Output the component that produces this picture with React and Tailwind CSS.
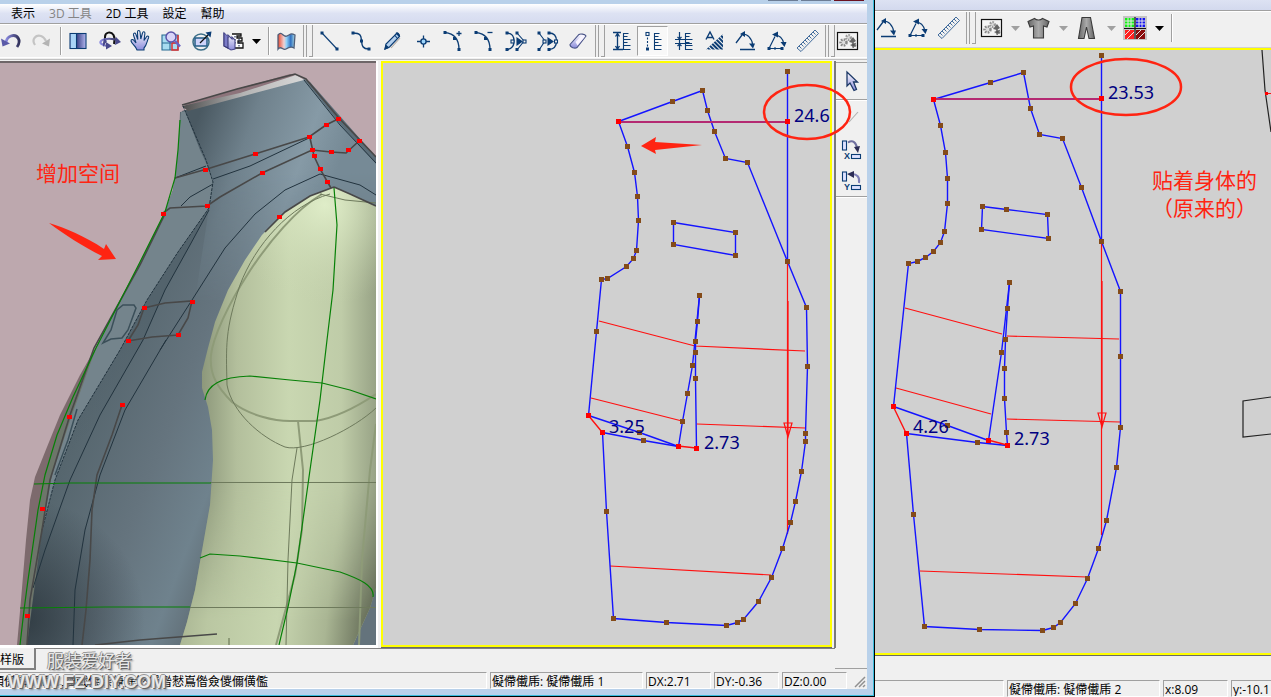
const NAVY = '#0b3c74';

function Icon({ children, size = 26, box = '0 0 26 26' }) {
    return (
        <svg width={size} height={size} viewBox={box} fill="none" stroke={NAVY} strokeWidth="1.1" className="shrink-0">
            {children}
        </svg>
    );
}

/* small filled square centred on a point */
function Dot({ x, y, r = 1.5, fill = NAVY }) {
    return <rect x={x - r} y={y - r} width={r * 2} height={r * 2} fill={fill} stroke={fill === NAVY ? 'none' : NAVY} />;
}

const UndoIcon = () => (
    <Icon>
        <path d="M19 19c5-7 0-13-6-11-3 1-4.500 3.500-5 6" stroke="url(#lilac)" strokeWidth="2.800" />
        <path d="M3 10.500l1.500 8 7.500-3z" fill="#5a5aa8" stroke="none" />
    </Icon>
);

const RedoIcon = () => (
    <Icon>
        <path d="M7 17c-4-6 1-10.500 6-9 3 1 4 3 5 5" stroke="#c4c4c4" strokeWidth="2.200" />
        <path d="M22 10.500l-1 8-7-3z" fill="#b4b4b4" stroke="none" />
    </Icon>
);

const PanelIcon = () => (
    <Icon>
        <rect x="5" y="5.500" width="16" height="15" fill="url(#indigo)" />
        <rect x="5.600" y="6" width="5.400" height="14" fill="#a9d4f7" stroke="none" />
        <path d="M11.500 5.500v15" />
    </Icon>
);

const OrbitIcon = () => (
    <Icon>
        <path d="M9 13V9c0-5 6-6 8.500-2 1.500 3 1.500 6 .5 9" stroke="#111" strokeWidth="2" />
        <path d="M22 13c-4-3-14-3-17 0-2 2 1 4 6 5" stroke="url(#lilac)" strokeWidth="2.200" />
        <path d="M10 21.500V14l6 4zM20 9l5 5-6 3zM7 19l4-6-3-3-1 5z" fill="#49498c" stroke="none" />
    </Icon>
);

const HandIcon = () => (
    <Icon>
        <path
            d="M9 20c-1-2-4-4-5-7 0-2 2-2 3-.5L9 15 6.500 7c-.5-2 1.500-2.600 2.300-1l2 5.500L10.500 4c0-2 2.300-2 2.500 0l.8 7L15.500 5c.5-2 2.600-1.500 2.400.5L17 12.500l2.500-3.700c1-1.500 2.800-.5 2 1.200C20 13 20 17 17 20v2H10z"
            fill="url(#hand)"
        />
    </Icon>
);

const ZoomIcon = () => (
    <Icon>
        <path d="M4 7h16v15H4zM4 15h16M12 8v14" fill="#a8dcf0" stroke="#276a92" />
        <path d="M14 15h6V7M14 15v7h6v-7" stroke="#e03030" strokeWidth="1.500" />
        <circle cx="13" cy="9" r="5" fill="#d8d4f8" stroke="#5a54a8" strokeWidth="1.500" />
        <path d="M17 13l5 5.500" stroke="#6a60c0" strokeWidth="2.600" />
    </Icon>
);

const ScaleIcon = () => (
    <Icon>
        <circle cx="12" cy="14" r="8" stroke="#3d6f88" strokeWidth="1.500" />
        <rect x="6" y="10" width="12" height="8" fill="#cfd4fa" stroke="#235c86" strokeWidth="1.500" />
        <path d="M11 15L21 5" stroke="#111" strokeWidth="1.300" />
        <path d="M22.500 3.500l-1 6-5-5z" fill={NAVY} stroke="none" />
    </Icon>
);

const LayersIcon = () => (
    <Icon>
        <path d="M12 6h9v2h-4v2h5v3h-4v2h5v5h-9" fill="#fff" stroke="#111" strokeWidth="1.300" />
        <path d="M15 8v9M19 11v8" stroke="#1d2a55" strokeDasharray="1.500 1.500" />
        <path d="M4 5l4 4V7l4 4V9l3 3v9l-4 1-7-4z" fill="url(#hand)" stroke="#46468a" />
        <path d="M4 5v13l4 2V9" fill="#7c7cc8" stroke="#3b3b78" />
    </Icon>
);

const ClothIcon = () => (
    <Icon>
        <path d="M5 7c4-5 5 3 9 1s4-3 8-1l-1 13c-3-2-5-1-8 1s-5-4-8 0z" fill="url(#cloth)" stroke="#4e5d78" strokeWidth="1.300" />
    </Icon>
);

const LineIcon = () => (
    <Icon>
        <path d="M5 5l15 16" />
        <Dot x={5} y={5} />
        <Dot x={20} y={21} />
    </Icon>
);

const SplineIcon = () => (
    <Icon>
        <path d="M5 5c9 0 8 4 8.500 8S14 21 21 21" strokeWidth="1.400" />
        <Dot x={5} y={5} />
        <Dot x={13.500} y={13} />
        <Dot x={21} y={21} />
    </Icon>
);

const PencilIcon = () => (
    <Icon>
        <path d="M6 21l1-5L17.500 5.500l3 3L10.500 19z" fill="#b4d0ee" strokeWidth="1.200" />
        <path d="M15.500 7l3 3.500M17 5.500c1-2 4 .5 3.500 3M6 21l3.500-1.500-2.500-2z" fill={NAVY} />
        <path d="M12 20l9-10" stroke="#b0a8a0" />
    </Icon>
);

const PointIcon = () => (
    <Icon>
        <path d="M7 13.500h13M13.500 7.500v12" strokeWidth="1.300" />
        <circle cx="13.500" cy="13.500" r="2.600" fill="#9cd4fa" strokeWidth="1.400" />
    </Icon>
);

function ArcEdit({ plus }) {
    return (
        <Icon>
            <path d="M4 4.500c9 1 14 7 14 17" strokeWidth="1.300" />
            <Dot x={4} y={4.500} />
            <Dot x={13.500} y={10.500} />
            <Dot x={18} y={21.500} />
            <path d={plus ? 'M15.500 5.500h5M18 3v5' : 'M15.500 4.500h5'} strokeWidth="1.300" />
        </Icon>
    );
}

const RoundIcon = () => (
    <Icon>
        <path d="M4 5c6 0 7 4 7 8s-1 8-7 8.500" strokeWidth="1.300" />
        <path d="M14 5l7 8-7 9" />
        <path d="M14 10v7l5-3.500z" fill={NAVY} />
        <Dot x={4} y={5} /><Dot x={4} y={21.500} /><Dot x={14} y={5} /><Dot x={14} y={21.500} />
        <Dot x={9.500} y={13.500} fill="#f0f0f0" /><Dot x={21.500} y={13.500} fill="#f0f0f0" />
    </Icon>
);

const SharpIcon = () => (
    <Icon>
        <path d="M5 5l6 8-6 9" />
        <path d="M15 5c6 0 7.500 4 7.500 8s-1.500 8-7.500 8.500" strokeWidth="1.300" />
        <path d="M14 10v7l5-3.500z" fill={NAVY} />
        <Dot x={5} y={5} /><Dot x={5} y={21.500} /><Dot x={15} y={5} /><Dot x={15} y={21.500} />
        <Dot x={10.500} y={13.500} fill="#f0f0f0" /><Dot x={22} y={13.500} fill="#f0f0f0" />
    </Icon>
);

const EraserIcon = () => (
    <Icon>
        <path d="M5 16.500L14 6.500c1-1 6-.5 7 1.500L12 19.500c-2 1.500-7 0-7-3z" fill="url(#hand)" stroke="#4a5488" />
        <path d="M10.500 14L17 7l3 1.500-7.500 9z" fill="#f8f4ff" stroke="none" />
    </Icon>
);

function RulerMarks({ kind }) {
    return (
        <Icon>
            <path d="M14.500 5v17M14.500 5.500h5M14.500 8.500h4M14.500 11.500h7M14.500 14.500h4M14.500 17.500h7M14.500 21.500h7" />
            {kind === 'full' && <path d="M4 4.500h8M4 21.500h10M8.500 5v16M6.500 8.500l2-3 2 3M6.500 18l2 3 2-3" strokeWidth="1.300" />}
            {kind === 'dots' && (
                <>
                    <path d="M7.500 6v14" strokeDasharray="2 1.500" />
                    <Dot x={7.500} y={6} fill="#fff" />
                    <Dot x={7.500} y={21} />
                </>
            )}
            {kind === 'inner' && <path d="M4 11.500h17M4 15.500h17M8.500 4v18M6.500 9l2 2 2-2M6.500 18l2-2 2 2" strokeWidth="1.200" />}
        </Icon>
    );
}

const AreaIcon = () => (
    <Icon>
        <path d="M4 21.500L21 6v15.500z" fill="url(#hatch)" stroke="none" />
        <path d="M4 11.500L8 4l4 7.500M5.500 9.500h5" strokeWidth="1.400" />
    </Icon>
);

const AngleIcon = () => (
    <Icon>
        <path d="M3 15L9 7M7 21.500h15" strokeWidth="1.300" />
        <path d="M9 6c7 0 10 5 11 12" strokeWidth="1.200" />
        <path d="M7 6l5-3v6zM20 20.500l-4-5h6z" fill={NAVY} stroke="none" />
    </Icon>
);

const TriAngleIcon = () => (
    <Icon>
        <path d="M5 20.500h13M5 20.500l6-12" strokeWidth="1.200" />
        <path d="M10 7c7 0 9 4 10 9" strokeWidth="1.200" />
        <path d="M8 6.500l6-3v6zM20.500 19l-4-5h6z" fill={NAVY} stroke="none" />
        <Dot x={5} y={20.500} /><Dot x={18} y={20.500} /><Dot x={11} y={20.500} r={1} />
    </Icon>
);

const MeasureIcon = () => (
    <Icon>
        <g stroke="#2e5c92" strokeWidth="0.900">
            <path d="M2 20L20 2l3.500 3.500L6 23.500z" />
            <path d="M4 18l2.500 2.500M6 16l2.500 2.500M8 14l2.500 2.500M10 12l2.500 2.500M12 10l2.500 2.500M14 8l2.500 2.500M16 6l2.500 2.500M18 4l2.500 2.500" />
        </g>
    </Icon>
);

const GearsIcon = () => (
    <Icon>
        <rect x="2.500" y="4.500" width="20" height="17" fill="#f4f4f4" stroke="#111" strokeWidth="1.200" />
        <circle cx="8.500" cy="14.500" r="3" fill="#ddd" stroke="#888" strokeWidth="2.500" strokeDasharray="1.600 1.200" />
        <circle cx="13.500" cy="9.500" r="2.300" fill="#ddd" stroke="#999" strokeWidth="2.300" strokeDasharray="1.400 1" />
        <circle cx="18.500" cy="17" r="2" fill="#555" stroke="#777" strokeWidth="1.800" strokeDasharray="1.400 1" />
        <path d="M14 14l4-5 3 4-3 2z" fill="#666" stroke="none" />
    </Icon>
);

const ShirtIcon = () => (
    <Icon>
        <path d="M8.500 3.500c2 2 6 2 8 0l6.500 3-2 5.500-3.500-1v12h-10V11L4 12 2 6.500z" fill="url(#grey)" stroke="#3a3a3a" />
    </Icon>
);

const PantsIcon = () => (
    <Icon>
        <path d="M8 2.500h8.500l4 21h-5.500L12.500 12 10 23.500H4.500z" fill="url(#grey)" stroke="#3a3a3a" />
    </Icon>
);

const SwatchIcon = () => (
    <Icon>
        <path d="M1 1h24v24H1z" fill="#c4c4c4" stroke="none" />
        <path d="M3 3h9v9H3z" fill="#14f014" stroke="none" />
        <path d="M14 3h9v9h-9z" fill="#1414f0" stroke="none" />
        <path d="M3 15h9v9H3z" fill="#ff2020" stroke="none" />
        <path d="M14 15h9v9h-9z" fill="#8a0c0c" stroke="none" />
        <path d="M6 3v9M9 3v9M3 6h9M3 9h9M17 3v9M20 3v9M14 6h9M14 9h9M3 20l5-5M5 24l7-7M14 20l5-5M16 24l7-7" stroke="#e8e8e8" strokeWidth="1" />
        <path d="M13 2v22M2 13.500h22" stroke="#111" strokeWidth="1.200" />
    </Icon>
);

const ArrowIcon = () => (
    <Icon>
        <path d="M8 3v14l3-3 4 7.500 2.500-1-3-7.500h4z" fill="url(#hand)" stroke="#1c3866" strokeWidth="1.300" />
    </Icon>
);

function FlipIcon({ axis }) {
    return (
        <Icon>
            <rect x="3.500" y="4" width="4" height="9" fill="#dfe2ff" />
            <rect x="12.500" y="17.500" width="9" height="4" fill="#dfe2ff" />
            {axis === 'X' ? (
                <>
                    <path d="M9 5.500c5-3 8 0 9 5.500" stroke="#7070a0" strokeWidth="2" />
                    <path d="M15 10l6-1-2 7z" fill="#2c2c55" stroke="none" />
                </>
            ) : (
                <>
                    <path d="M20 15c1-6-2-9-7-9" stroke="#8080b8" strokeWidth="2" />
                    <path d="M8 6l7-3v7z" fill="#2c2c55" stroke="none" />
                </>
            )}
            <text x="5" y="22" fontSize="9" fontWeight="700" fontFamily="Liberation Sans, sans-serif" fill={NAVY} stroke="none">
                {axis}
            </text>
        </Icon>
    );
}

/* gradients and hatches that the icons share */
function SharedDefs() {
    return (
        <svg width="0" height="0" className="absolute" aria-hidden="true">
            <defs>
                <linearGradient id="lilac"><stop offset="0" stopColor="#8a8ae0" /><stop offset="1" stopColor="#33335c" /></linearGradient>
                <linearGradient id="indigo"><stop offset="0.3" stopColor="#202870" /><stop offset="1" stopColor="#b4b8f0" /></linearGradient>
                <linearGradient id="hand" x2="0" y2="1"><stop offset="0" stopColor="#fff" /><stop offset="1" stopColor="#8c8cdc" /></linearGradient>
                <linearGradient id="cloth">
                    <stop offset="0" stopColor="#e84a30" /><stop offset="0.35" stopColor="#f0d0d0" /><stop offset="0.5" stopColor="#90d0f8" />
                    <stop offset="0.75" stopColor="#3070c0" /><stop offset="1" stopColor="#b0e0e8" />
                </linearGradient>
                <linearGradient id="grey"><stop offset="0" stopColor="#666" /><stop offset="0.5" stopColor="#aaa" /><stop offset="1" stopColor="#666" /></linearGradient>
                <pattern id="hatch" width="3" height="3" patternUnits="userSpaceOnUse" patternTransform="rotate(45)">
                    <path d="M0 0h3v2H0z" fill={NAVY} />
                </pattern>
            </defs>
        </svg>
    );
}

function Tool({ label, children, active, className = 'w-[31px]' }) {
    return (
        <button
            type="button"
            aria-label={label}
            className={`${className} h-[30px] shrink-0 flex items-center justify-center ${active ? 'bg-[#f8f8f8] border border-[#a0a0a0] border-r-white border-b-white' : ''}`}
        >
            {children}
        </button>
    );
}

function Caret({ label, dark }) {
    return (
        <Tool label={label} className="w-4">
            <svg width="9" height="5" viewBox="0 0 9 5">
                <path d="M0 0h9L4.500 5z" fill={dark ? '#000' : '#a0a0a0'} />
            </svg>
        </Tool>
    );
}

const Divider = () => <span className="ml-1 h-7 w-0.5 shrink-0 border-l border-l-[#a0a0a0] border-r border-r-white" />;

function Grip() {
    return (
        <span className="flex h-8 w-[13px] shrink-0 items-stretch gap-0.5 pl-0.5">
            <span className="w-px bg-[#a0a0a0]" />
            <span className="w-px bg-[#a0a0a0]" />
            <span className="w-1 border-r border-b border-[#a0a0a0]" />
        </span>
    );
}

function MainToolbar() {
    return (
        <div className="flex h-8 items-center overflow-hidden bg-[#f0f0f0]">
            <Tool label="Undo" className="-ml-1 w-[30px]"><UndoIcon /></Tool>
            <Tool label="Redo" className="w-[30px]"><RedoIcon /></Tool>
            <Divider />
            <Tool label="Panels"><PanelIcon /></Tool>
            <Tool label="Rotate"><OrbitIcon /></Tool>
            <Tool label="Pan"><HandIcon /></Tool>
            <Tool label="Zoom"><ZoomIcon /></Tool>
            <Tool label="Scale"><ScaleIcon /></Tool>
            <Tool label="Layers"><LayersIcon /></Tool>
            <Caret label="Layer options" dark />
            <Divider />
            <Tool label="Cloth"><ClothIcon /></Tool>
            <Grip />
            <Tool label="Line"><LineIcon /></Tool>
            <Tool label="Curve"><SplineIcon /></Tool>
            <Tool label="Pencil"><PencilIcon /></Tool>
            <Tool label="Point"><PointIcon /></Tool>
            <Tool label="Add point"><ArcEdit plus /></Tool>
            <Tool label="Remove point"><ArcEdit /></Tool>
            <Tool label="To corner"><RoundIcon /></Tool>
            <Tool label="To curve"><SharpIcon /></Tool>
            <Tool label="Eraser"><EraserIcon /></Tool>
            <Grip />
            <Tool label="Length"><RulerMarks kind="full" /></Tool>
            <Tool label="Point distance" active><RulerMarks kind="dots" /></Tool>
            <Tool label="Gap"><RulerMarks kind="inner" /></Tool>
            <Tool label="Area"><AreaIcon /></Tool>
            <Tool label="Angle"><AngleIcon /></Tool>
            <Tool label="Three point angle"><TriAngleIcon /></Tool>
            <Tool label="Ruler"><MeasureIcon /></Tool>
            <Grip />
            <Tool label="Simulation" className="w-6"><GearsIcon /></Tool>
        </div>
    );
}

function SecondToolbar() {
    return (
        <div className="flex h-8 items-center overflow-hidden bg-[#f0f0f0]">
            <Tool label="Angle" className="-ml-1 w-[31px]"><AngleIcon /></Tool>
            <Tool label="Three point angle"><TriAngleIcon /></Tool>
            <Tool label="Ruler"><MeasureIcon /></Tool>
            <Grip />
            <Tool label="Simulation" className="w-[30px]"><GearsIcon /></Tool>
            <Caret label="Simulation options" />
            <Tool label="Tops" className="w-8"><ShirtIcon /></Tool>
            <Caret label="Tops options" />
            <Tool label="Trousers" className="w-8"><PantsIcon /></Tool>
            <Caret label="Trousers options" />
            <Tool label="Fabrics" className="w-8"><SwatchIcon /></Tool>
            <Caret label="Fabrics options" dark />
            <Divider />
        </div>
    );
}

const pins = [
    [338, 119], [326, 125], [309, 137], [255, 154], [205, 170], [312, 150], [331, 152], [348, 150],
    [359, 141], [314, 156], [320, 169], [327, 182], [262, 173], [279, 217], [207, 206], [163, 214],
    [144, 308], [192, 302], [178, 335], [128, 341], [122, 405], [69, 417], [42, 509], [27, 616],
];

function ModelView() {
    return (
        <svg viewBox="0 63 376 582" preserveAspectRatio="xMinYMin slice" className="block h-full w-full" fill="none">
            <defs>
                <linearGradient id="body" gradientUnits="userSpaceOnUse" x1="80" y1="420" x2="240" y2="480">
                    <stop offset="0" stopColor="#56666e" /><stop offset="0.5" stopColor="#65747e" /><stop offset="0.85" stopColor="#6f828d" /><stop offset="1" stopColor="#64737c" />
                </linearGradient>
                <linearGradient id="chest" gradientUnits="userSpaceOnUse" x1="190" y1="140" x2="330" y2="190">
                    <stop offset="0" stopColor="#4a5962" /><stop offset="0.35" stopColor="#6f818c" /><stop offset="0.75" stopColor="#869aa6" /><stop offset="1" stopColor="#768a96" />
                </linearGradient>
                <linearGradient id="chestFade" x2="0" y2="1">
                    <stop offset="0" stopColor="#fff" /><stop offset="0.45" stopColor="#fff" /><stop offset="1" stopColor="#000" />
                </linearGradient>
                <mask id="chestMask"><path d="M150 60h230v250H150z" fill="url(#chestFade)" /></mask>
                <radialGradient id="lowBody" gradientUnits="userSpaceOnUse" cx="25" cy="620" r="120">
                    <stop offset="0" stopColor="#252f36" stopOpacity="0.75" /><stop offset="1" stopColor="#252f36" stopOpacity="0" />
                </radialGradient>
                <linearGradient id="fold" gradientUnits="userSpaceOnUse" x1="0" y1="300" x2="0" y2="450">
                    <stop offset="0" stopColor="#53636c" /><stop offset="1" stopColor="#53636c" stopOpacity="0" />
                </linearGradient>
                <linearGradient id="arm" gradientUnits="userSpaceOnUse" x1="202" y1="400" x2="376" y2="400">
                    <stop offset="0" stopColor="#8d987b" /><stop offset="0.2" stopColor="#b3bf9c" /><stop offset="0.5" stopColor="#c9d7b1" />
                    <stop offset="0.8" stopColor="#bfcca8" /><stop offset="1" stopColor="#98a386" />
                </linearGradient>
                <linearGradient id="wrist" gradientUnits="userSpaceOnUse" x1="180" y1="600" x2="376" y2="620">
                    <stop offset="0" stopColor="#a9b593" /><stop offset="0.15" stopColor="#bac7a2" /><stop offset="0.5" stopColor="#c8d6b0" />
                    <stop offset="0.75" stopColor="#a9b593" /><stop offset="1" stopColor="#59604d" />
                </linearGradient>
                <linearGradient id="wristFade" gradientUnits="userSpaceOnUse" x1="0" y1="480" x2="0" y2="620">
                    <stop offset="0" stopColor="#000" /><stop offset="1" stopColor="#fff" />
                </linearGradient>
                <mask id="wristMask"><path d="M150 470h230v180H150z" fill="url(#wristFade)" /></mask>
                <radialGradient id="cap" gradientUnits="userSpaceOnUse" cx="325" cy="205" r="100">
                    <stop offset="0" stopColor="#e2f0cb" stopOpacity="0.9" /><stop offset="1" stopColor="#c8d5b0" stopOpacity="0" />
                </radialGradient>
                <linearGradient id="collar"><stop offset="0" stopColor="#4d4d4d" /><stop offset="0.5" stopColor="#b4b4b4" /><stop offset="1" stopColor="#d8d8d8" /></linearGradient>
            </defs>

            <path d="M0 63h376v582H0z" fill="#bda8ae" />
            <path d="M100 340L80 375 60 415 47 447 35 477 30 500 26 540 21 600 17 645H60L110 400z" fill="#7d6a6d" />
            <path
                d="M180 112L179 140 177 163 173 190 165 212 140 262 96 348 73 397 57 435 45 475 38 510 33 545 28 580 24 610 20 645H376V158L340 118 304 79 188 111z"
                fill="url(#body)"
            />
            <path d="M182 111L206 165 213 182 209 208 195 300 376 300V158L340 118 304 79z" fill="url(#chest)" mask="url(#chestMask)" />
            <path
                d="M181 112L185 111 200 150 207 165 213 182 209 208 178 252 147 300 120 350 78 420 55 480 42 530 33 545 45 475 57 435 73 397 96 348 140 262 165 212 173 190 177 163z"
                fill="#74848c"
            />
            <path d="M96 348L73 397 57 435 45 475 38 510 28 580 20 645H27L42 530 52 475 72 415z" fill="#6d756a" />
            <path d="M209 208L178 252 147 300 120 350 78 420 70 450 95 425 143 340 165 290 190 245z" fill="url(#fold)" />
            <path d="M42 530L55 480H150V645H27z" fill="url(#lowBody)" />
            <path d="M182 105L237 89 290 74 297 76 200 106z" fill="#8d747b" />
            <path d="M182 106L240 93 296 75 304 80 188 111z" fill="url(#collar)" />
            <path d="M304 79L310 82 376 157V164L340 124z" fill="#5b6d78" />

            <path
                d="M334 187L310 196 285 212 262 235 245 260 228 290 215 322 208 348 202 372 202 388 208 407 212 430 213 460 210 505 203 545 195 590 187 622 180 645H353L370 608 376 588V206L350 194z"
                fill="url(#arm)"
            />
            <path d="M212 480L210 505 203 545 195 590 187 622 180 645H353L370 608 376 588V480z" fill="url(#wrist)" mask="url(#wristMask)" />
            <path d="M334 187L310 196 285 212 262 235 245 260 228 290 225 320H376V206L350 194z" fill="url(#cap)" />

            <g stroke="#8e9b78" strokeWidth="2">
                <path d="M322 194C270 225 215 320 211 355C209 375 218 388 232 402C250 416 275 421 290 421H315C335 418 355 408 376 394" />
                <path d="M298 421L303 470 302 530 295 575 276 645M376 424L370 470 362 560 359 645M229 638V645" />
            </g>
            <g stroke="#6e7a5c">
                <path d="M330 194C290 205 255 245 240 285C225 330 226 345 227 385C232 412 260 437 285 447C305 453 355 428 376 408" />
                <path d="M297 448L292 480 288 560 286 645M210 482.500H376M190 607.500H376M320 194L345 200 376 203" />
            </g>
            <g stroke="#22333e">
                <path d="M213 179L250 166 309 138M209 210L190 245 165 290 143 340 100 415 70 480 45 550 33 588" />
                <path d="M160 350L192 300 225 248 255 214 285 190 320 174 360 185 376 195M166 340L125 410 100 475 85 530 75 590 73 645" />
                <path d="M183 106L206 160 213 182 209 208 178 252 147 300 120 350 78 420 55 480 42 530" strokeDasharray="3 1" />
                <path d="M304 80L340 125 376 163M206 166L175 178M213 184L190 197 181 206" />
            </g>
            <g stroke="#484848" strokeWidth="1.600">
                <path d="M182 105L237 89 295 74 306 79 338 117 376 157" />
                <path d="M175 178L207 169 255 154 309 137 326 125 338 119" />
                <path d="M163 213L170 208 207 206 220 197 262 173 312 150 331 152 346 153 359 141M310 138L314 156 320 169 331 188" />
                <path d="M144 308L165 303 192 301 188 318 178 335 152 337 128 341 138 325z" />
                <path d="M122 405L112 435 97 475 92 510 90 560 86 610 82 645M95 645L140 640 217 634" />
                <path d="M165 214L140 265 94 348 70 415 50 480 42 530 30 600 27 645" />
                <path d="M334 187L310 196 285 212 265 232M334 187L350 194 376 206" />
            </g>
            <path d="M103 343L111 330 117 310 123 305H134L136 308 128 330 122 338 111 339zM77 409L68 440 55 475" stroke="#3b4f59" strokeWidth="1.500" />
            <g stroke="#078007" strokeWidth="1.200">
                <path d="M180 120L178 150 175 178 165 212 140 262 96 348 73 397 57 435 45 475 38 510 33 545 28 580 24 610 20 645" />
                <path d="M334 188L337 225 333 290 327 340 320 400 310 470 303 520 297 563 288 607 279 645" />
                <path d="M205 400C207 385 220 377 250 376L290 380 322 383 350 390 376 399" />
                <path d="M200 558L210 554 240 556 297 563 340 572C360 579 375 586 373 597" />
                <path d="M34 484L70 483H211M20 608L105 607H190" />
            </g>
            {pins.map(([x, y]) => (
                <rect key={`${x}-${y}`} x={x - 2} y={y - 2} width="5" height="4" fill="#ff0000" />
            ))}

            <path d="M49 223C65 228 85 236 104 249L106 244 116 259 98 260 102 256C82 246 65 235 49 223z" fill="#ff2412" />
            <text x="36" y="181" fontSize="21" fill="#ff2412" className="font-['Noto_Sans_CJK_SC',sans-serif]">增加空间</text>
        </svg>
    );
}

const leftPattern = {
    outline: [
        [618, 121], [672, 101], [702, 90], [707, 110], [714, 131], [725, 158], [747, 162], [787, 261], [806, 307],
        [807, 366], [805, 433], [805, 441], [801, 471], [795, 501], [790, 522], [782, 548], [771, 577], [758, 601],
        [743, 619], [737, 622], [726, 625], [666, 622], [613, 618], [606, 511], [602, 432],
    ],
    side: [
        [618, 121], [627, 146], [634, 172], [637, 196], [638, 220], [636, 250], [633, 258], [626, 266], [607, 278],
        [601, 279], [596, 331], [588, 415],
    ],
    darts: [
        [[699, 295], [697, 321], [695, 341], [695, 352], [695, 378], [696, 448]],
        [[699, 295], [692, 365], [687, 393], [682, 421], [678, 446]],
        [[588, 415], [639, 432], [678, 446]],
        [[602, 432], [643, 440], [678, 446]],
    ],
    pocket: [[673, 222], [735, 232], [735, 255], [673, 244]],
    guides: 'M599 321L695 346 805 351M591 398L682 421M697 424L805 428M610 566L771 575',
    ends: [[618, 121], [787, 121], [588, 415], [602, 432], [678, 446], [696, 448]],
    grain: { x: 787, top: 71, cross: 261, width: 121, arrow: 436, bottom: 534 },
    red: 'M588 415L602 432M678 446L696 448',
    labels: [[794, 122, '24.6'], [609, 433, '3.25'], [704, 449, '2.73']],
};

const rightPattern = {
    outline: [
        [933, 99], [990, 82], [1023, 72], [1030, 108], [1039, 134], [1062, 138], [1081, 187], [1101, 241], [1120, 291],
        [1120, 356], [1120, 427], [1116, 467], [1106, 520], [1098, 548], [1087, 578], [1075, 603], [1060, 622],
        [1053, 627], [1042, 630], [979, 629], [924, 626], [913, 514], [906, 433],
    ],
    side: [
        [933, 99], [940, 125], [945, 152], [947, 178], [947, 203], [944, 231], [940, 242], [933, 251], [925, 257],
        [917, 261], [908, 263], [893, 406],
    ],
    darts: [
        [[1009, 282], [1007, 308], [1005, 339], [1004, 368], [1004, 398], [1006, 432], [1007, 445]],
        [[1009, 282], [1001, 352], [988, 440]],
        [[893, 406], [947, 425], [988, 440]],
        [[906, 433], [977, 442], [1007, 445]],
    ],
    pocket: [[982, 206], [1006, 209], [1047, 214], [1048, 238], [981, 229]],
    guides: 'M905 308L1002 334M1007 336L1119 339M896 388L991 414M1007 419L1120 422M920 571L1087 577',
    ends: [[933, 99], [1101, 98], [893, 406], [906, 433], [988, 440], [1007, 445]],
    grain: { x: 1101, top: 55, cross: 241, width: 98, arrow: 426, bottom: 535 },
    red: 'M893 406L906 433M988 440L1007 445',
    labels: [[1108, 99, '23.53'], [913, 433, '4.26'], [1014, 445, '2.73']],
};

const toPoints = (list) => list.map(([x, y]) => `${x + 0.5},${y + 0.5}`).join(' ');

function Pattern({ data }) {
    const { outline, side, darts, pocket, guides, ends, grain, red, labels } = data;
    const isEnd = ([x, y]) => ends.some(([ex, ey]) => ex === x && ey === y);
    const nodes = [...outline, ...side, ...darts.flat(), ...pocket, [grain.x, grain.top], [grain.x, grain.cross]];
    const gx = grain.x + 0.5;

    return (
        <>
            <g fill="none" stroke="#ff1010" strokeWidth="1.200">
                <path d={guides} />
                <path d={`M${gx} ${grain.cross}V${grain.bottom}`} />
                <path d={`M${gx + 0.5} ${grain.cross + 40}V${grain.arrow}M${gx - 3.5} ${grain.arrow - 13}h8l-4 14z`} />
            </g>
            <g fill="none" stroke="#1414ff" strokeWidth="1.400">
                <polyline points={toPoints(outline)} />
                <polyline points={toPoints(side)} />
                <polygon points={toPoints(pocket)} />
                {darts.map((d, i) => (
                    <polyline key={i} points={toPoints(d)} />
                ))}
                <path d={`M${gx} ${grain.top}V${grain.cross}`} />
            </g>
            <path d={`M${ends[0][0]} ${grain.width + 1}H${gx}`} stroke="#b42a72" strokeWidth="2" />
            <path d={red} stroke="#ff1010" strokeWidth="1.400" />
            {nodes.filter((n) => !isEnd(n)).map(([x, y], i) => (
                <rect key={i} x={x - 2} y={y - 2} width="5" height="5" fill="#844b19" />
            ))}
            {ends.map(([x, y], i) => (
                <rect key={i} x={x - 2} y={y - 2} width="5" height="5" fill="#ff0000" />
            ))}
            {labels.map(([x, y, text]) => (
                <text key={`${x}-${y}`} x={x} y={y} fontSize="18" fill="#000080" className="font-['Noto_Sans',sans-serif]">
                    {text}
                </text>
            ))}
        </>
    );
}

function Field({ children, className = '' }) {
    return (
        <div className={`h-[17px] overflow-hidden whitespace-nowrap border border-[#a0a0a0] border-r-white border-b-white pl-px leading-[17px] ${className}`}>
            {children}
        </div>
    );
}

const menus = ['表示', '3D 工具', '2D 工具', '設定', '幫助'];

function MainWindow() {
    return (
        <section className="relative z-10 flex min-w-0 flex-col border-r border-black">
            <div className="flex min-h-0 flex-1 flex-col border-r border-[#38bcdc] bg-[#b9d1ea]">
                <div className="flex h-1 shrink-0 items-start justify-end gap-[3px] pr-[9px]">
                    <span className="h-px w-[30px] bg-[#6c7d95]" />
                    <span className="h-px w-[30px] bg-[#6c7d95]" />
                    <span className="h-px w-[30px] bg-[#6b1220]" />
                </div>
                <div className="mr-1.5 flex min-h-0 flex-1 flex-col bg-[#f0f0f0]">
                    <nav className="flex h-[19px] shrink-0 items-center gap-[14px] bg-linear-to-b from-white via-[#dde2f3] to-[#d6dcf0] pl-[11px] text-xs leading-[19px]">
                        {menus.map((m) => (
                            <button key={m} type="button" disabled={m.startsWith('3D')} className="text-black disabled:text-[#858585]">
                                {m}
                            </button>
                        ))}
                    </nav>
                    <div className="h-0.5 shrink-0 border-t border-[#a0a0a0] bg-white" />
                    <MainToolbar />
                    <div className="h-1 shrink-0 border-t border-white">
                        <div className="h-0.5 border-b border-[#c0c0c0]" />
                    </div>

                    <div className="flex min-h-0 flex-1">
                        <div className="flex min-w-0 flex-[376_1_0%] flex-col border-t-2 border-[#6e6668]">
                            <div className="min-h-0 flex-1 overflow-hidden"><ModelView /></div>
                            <div className="h-[3px] bg-white" />
                        </div>
                        <div className="w-[5px] shrink-0 border-l-2 border-white" />
                        <div className="relative z-10 flex min-w-0 flex-[451_1_0%] flex-col border-b border-[#696969]">
                            <div className="min-h-0 flex-1 border-2 border-[#ffff00] bg-[#d0d0d0]">
                                <svg viewBox="383 63 447 582" preserveAspectRatio="xMinYMin meet" className="block h-full w-full overflow-visible">
                                    <Pattern data={leftPattern} />
                                    <path d="M641 146L656 137 655 142 702 145 655 150 656 154z" fill="#ff2412" />
                                    <ellipse cx="807" cy="112" rx="43" ry="27" fill="none" stroke="#ff2412" strokeWidth="2.500" />
                                </svg>
                            </div>
                        </div>
                        <aside className="ml-0.5 flex w-[33px] shrink-0 flex-col items-center border-l-2 border-[#7a7a7a] bg-[#f0f0f0]">
                            <div className="h-0.5 w-full border-b border-[#a0a0a0]" />
                            <Tool label="Select" className="mt-1"><ArrowIcon /></Tool>
                            <div className="mt-0.5 h-0.5 w-full border-t border-[#a0a0a0] bg-white" />
                            <Tool label="Slash"><Icon><path d="M10 19l9-10" stroke="#b0b0b0" /></Icon></Tool>
                            <Tool label="Flip X" className="mt-1"><FlipIcon axis="X" /></Tool>
                            <Tool label="Flip Y" className="mt-px"><FlipIcon axis="Y" /></Tool>
                            <div className="h-0.5 w-full border-t border-[#a0a0a0] bg-white" />
                        </aside>
                    </div>

                    <div className="relative flex h-6 shrink-0 text-xs leading-6">
                        <button type="button" className="h-[22px] w-9 border-r-2 border-b-2 border-[#808080] text-left leading-6">样版</button>
                        <div className="flex-1 border-t border-[#808080]" />
                        <div className="mt-5 h-px w-8 bg-[#a0a0a0]" />
                        <div className="pointer-events-none absolute top-0 left-0 z-10 select-none whitespace-nowrap text-[#e8e8e8] [text-shadow:1px_1px_0_#666,-1px_0_0_#999,0_-1px_0_#999,2px_2px_2px_#888]">
                            <p className="ml-[47px] font-['Noto_Sans_CJK_SC',sans-serif] text-[17px] leading-6">服装爱好者</p>
                            <p className="ml-2 font-['Liberation_Sans',sans-serif] text-lg leading-[20px] font-bold">WWW.FZ-DIY.COM</p>
                        </div>
                    </div>
                    <footer className="flex shrink-0 items-start gap-[3px] text-xs text-black">
                        <Field className="flex-1 border-l-0">
                            <span className="-ml-[9px]">傾儊僯儏乕丄慖戰傑偨偼捈慜傊偺憖嶌偺僉儍儞僙儖</span>
                        </Field>
                        <Field className="w-[153px]">儗僀儎乕: 儗僀儎乕 1</Field>
                        <Field className="w-[65px]">DX:2.71</Field>
                        <Field className="w-[65px]">DY:-0.36</Field>
                        <Field className="w-[65px]">DZ:0.00</Field>
                        <svg width="17" height="16" viewBox="0 0 17 16" stroke="#909090" strokeWidth="1.500">
                            <path d="M5 15L15 5M9 15l6-6M13 15l2-2" />
                        </svg>
                    </footer>
                </div>
                <div className="h-1.5 shrink-0" />
            </div>
            <div className="h-0.5 shrink-0 border-t border-[#38bcdc] bg-black" />
        </section>
    );
}

function SecondWindow() {
    return (
        <section className="flex min-w-0 flex-col overflow-hidden bg-[#f0f0f0]">
            <div className="h-2.5 shrink-0 bg-linear-to-b from-[#dde2f3] to-[#d3d9ee]" />
            <div className="h-0.5 shrink-0 border-t border-[#a0a0a0] bg-white" />
            <SecondToolbar />
            <div className="h-1 shrink-0 border-b border-[#d0d0d0]" />
            <div className="min-h-0 flex-1 border-y-2 border-[#ffff00] bg-[#d0d0d0]">
                <svg viewBox="875 50 396 603" preserveAspectRatio="xMinYMin meet" className="block h-full w-full">
                    <Pattern data={rightPattern} />
                    <ellipse cx="1126" cy="87" rx="55" ry="28" fill="none" stroke="#ff2412" strokeWidth="2.500" />
                    <path d="M1262 50L1265 90 1271 132M1271 397L1243 401V437L1271 434" fill="none" stroke="#222" strokeWidth="1.200" />
                    <path d="M1266 93.500h5" stroke="#ff1010" />
                    <rect x="1265" y="92" width="3" height="3" fill="#ff0000" />
                    <g fontSize="21" fill="#ff2412" className="font-['Noto_Sans_CJK_SC',sans-serif]">
                        <text x="1152" y="188">贴着身体的</text>
                        <text x="1152" y="216">（原来的）</text>
                    </g>
                </svg>
            </div>
            <div className="h-[25px] shrink-0 border-t border-[#696969]" />
            <footer className="flex shrink-0 gap-[3px] text-xs text-black">
                <Field className="min-w-0 flex-1 border-l-0" />
                <Field className="w-[153px] shrink-0">儗僀儎乕: 儗僀儎乕 2</Field>
                <Field className="w-[65px] shrink-0">x:8.09</Field>
                <Field className="w-10 shrink-0 border-r-0">y:-10.1</Field>
            </footer>
        </section>
    );
}

export default function App() {
    return (
        <main className="grid h-screen grid-cols-[875fr_396fr] grid-rows-1 overflow-hidden bg-[#f0f0f0] font-['Open_Sans','Noto_Sans_CJK_TC',sans-serif]">
            <SharedDefs />
            <MainWindow />
            <SecondWindow />
        </main>
    );
}
